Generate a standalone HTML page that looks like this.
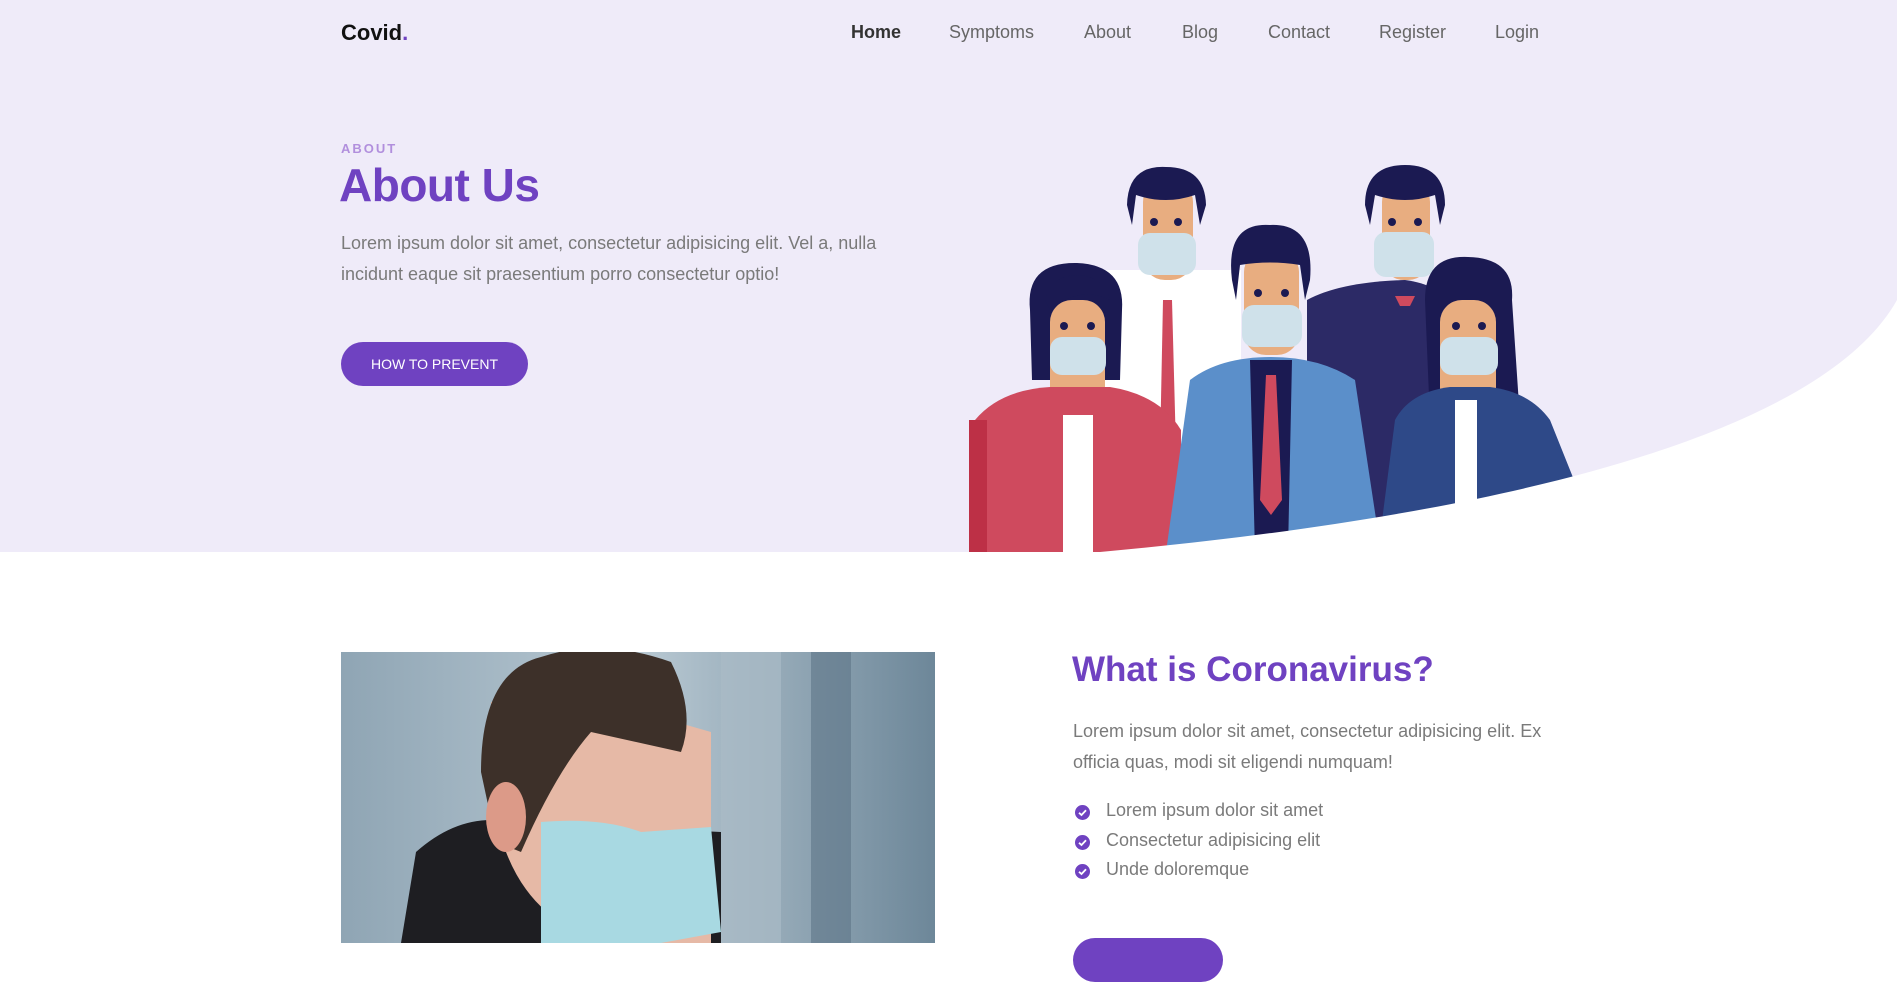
<!DOCTYPE html>
<html><head><meta charset="utf-8"><style>
*{margin:0;padding:0;box-sizing:border-box}
body{width:1897px;height:943px;overflow:hidden;background:#fff;font-family:"Liberation Sans",sans-serif;position:relative}
.hero{position:absolute;left:0;top:0;width:1897px;height:552px;background:#efebf9}
.abs{position:absolute;white-space:nowrap}
.logo{left:341px;top:20px;font-size:22px;font-weight:bold;color:#111}
.logo span{color:#6f42c1}
.nav{top:22px;font-size:18px;color:#666}
.p{color:#7a7a7a;font-size:18px;line-height:31px}
.btn{background:#6f42c1;color:#fff;border-radius:22px;text-align:center}
.li{font-size:18px;color:#7a7a7a}
.ck{position:absolute;width:15px;height:15px}
</style></head><body>
<div class="hero"></div>
<div class="abs logo">Covid<span>.</span></div>
<div class="abs nav" style="left:851px;color:#333;font-weight:bold">Home</div>
<div class="abs nav" style="left:949px">Symptoms</div>
<div class="abs nav" style="left:1084px">About</div>
<div class="abs nav" style="left:1182px">Blog</div>
<div class="abs nav" style="left:1268px">Contact</div>
<div class="abs nav" style="left:1379px">Register</div>
<div class="abs nav" style="left:1495px">Login</div>

<div class="abs" style="left:341px;top:141px;font-size:13px;font-weight:bold;letter-spacing:2px;color:#b18fdd">ABOUT</div>
<div class="abs" style="left:339px;top:158px;font-size:46px;font-weight:bold;color:#6f42c1;letter-spacing:-0.5px">About Us</div>
<div class="abs p" style="left:341px;top:228px">Lorem ipsum dolor sit amet, consectetur adipisicing elit. Vel a, nulla<br>incidunt eaque sit praesentium porro consectetur optio!</div>
<div class="abs btn" style="left:341px;top:342px;width:187px;height:44px;line-height:44px;font-size:14px">HOW TO PREVENT</div>

<svg class="abs" style="left:0;top:0" width="1897" height="552" viewBox="0 0 1897 552">
<g fill="#1b1a52">
<!-- back left man -->
<rect x="1103" y="270" width="138" height="282" fill="#fff"/>
<polygon points="1163,300 1172,300 1176,450 1168,470 1160,450" fill="#cf4a5e"/>
<rect x="1143" y="180" width="50" height="100" rx="22" fill="#e8ad80"/>
<path d="M1127,205 Q1128,165 1166,167 Q1205,167 1206,205 L1200,225 L1195,195 Q1166,205 1136,195 L1132,225 Z"/>
<circle cx="1154" cy="222" r="4"/><circle cx="1178" cy="222" r="4"/>
<rect x="1138" y="233" width="58" height="42" rx="12" fill="#cfe1ea"/>
<!-- back right man -->
<path d="M1307,300 Q1340,282 1405,280 Q1440,285 1440,300 L1440,552 L1307,552 Z" fill="#2c2a66"/>
<rect x="1382" y="180" width="48" height="100" rx="22" fill="#e8ad80"/>
<path d="M1365,205 Q1365,165 1405,165 Q1445,165 1445,205 L1440,225 L1435,195 Q1405,205 1375,195 L1370,225 Z"/>
<circle cx="1392" cy="222" r="4"/><circle cx="1418" cy="222" r="4"/>
<rect x="1374" y="232" width="60" height="45" rx="12" fill="#cfe1ea"/>
<polygon points="1395,296 1415,296 1410,306 1400,306" fill="#cf4a5e"/>
<!-- left woman -->
<path d="M1030,310 Q1025,262 1077,263 Q1125,265 1122,310 L1120,380 L1032,380 Z"/>
<rect x="1050" y="300" width="55" height="110" rx="22" fill="#e8ad80"/>
<path d="M1045,300 Q1050,275 1080,275 Q1105,278 1110,300 Q1080,285 1050,310 Z"/>
<circle cx="1064" cy="326" r="4"/><circle cx="1091" cy="326" r="4"/>
<rect x="1050" y="337" width="56" height="38" rx="12" fill="#cfe1ea"/>
<path d="M975,420 Q1000,390 1050,387 L1110,387 Q1160,395 1181,430 L1181,552 L969,552 Z" fill="#cf4a5e"/>
<rect x="1063" y="415" width="30" height="137" fill="#fff"/>
<rect x="969" y="420" width="18" height="132" fill="#bd3046"/>
<!-- right woman -->
<path d="M1425,300 Q1425,255 1468,257 Q1515,258 1512,300 L1520,420 L1430,420 Z"/>
<rect x="1440" y="300" width="56" height="110" rx="22" fill="#e8ad80"/>
<circle cx="1456" cy="326" r="4"/><circle cx="1482" cy="326" r="4"/>
<rect x="1440" y="337" width="58" height="38" rx="12" fill="#cfe1ea"/>
<path d="M1395,420 Q1410,392 1450,387 L1490,387 Q1530,392 1550,420 L1576,485 L1378,552 Z" fill="#2e4988"/>
<rect x="1455" y="400" width="22" height="110" fill="#fff"/>
<!-- center man -->
<path d="M1190,380 Q1220,357 1271,357 Q1320,357 1355,380 L1381,552 L1166,552 Z" fill="#5b8fca"/>
<polygon points="1250,360 1292,360 1288,552 1255,552"/>
<polygon points="1266,375 1276,375 1282,500 1271,515 1260,500" fill="#cf4a5e"/>
<rect x="1244" y="250" width="55" height="105" rx="22" fill="#e8ad80"/>
<path d="M1232,280 Q1225,222 1270,225 Q1315,223 1310,280 L1305,300 L1300,265 Q1270,260 1240,265 L1236,300 Z"/>
<circle cx="1258" cy="293" r="4"/><circle cx="1285" cy="293" r="4"/>
<rect x="1242" y="305" width="60" height="42" rx="12" fill="#cfe1ea"/>
</g>
<path d="M1897,300 C1830,420 1560,510 1100,552 L1897,552 Z" fill="#fff"/>
</svg>

<svg class="abs" style="left:341px;top:652px" width="594" height="291" viewBox="0 0 594 291">
<defs><linearGradient id="g" x1="0" x2="1"><stop offset="0" stop-color="#8fa5b4"/><stop offset=".5" stop-color="#b9c9d3"/><stop offset="1" stop-color="#6d8799"/></linearGradient></defs>
<rect width="594" height="291" fill="url(#g)"/>
<rect x="380" y="0" width="60" height="291" fill="#a9bac6" opacity=".7"/>
<rect x="470" y="0" width="40" height="291" fill="#5d7587" opacity=".6"/>
<path d="M60,291 L75,200 Q120,160 170,170 L380,180 L380,291 Z" fill="#1e1e22"/>
<path d="M150,50 Q150,140 165,200 Q200,290 300,291 L370,291 L370,80 L300,60 Z" fill="#e6b9a6"/>
<path d="M140,120 Q140,20 200,5 Q260,-15 330,10 Q355,60 340,100 L250,80 Q215,120 180,200 L155,190 Z" fill="#3d3029"/>
<ellipse cx="165" cy="165" rx="20" ry="35" fill="#dc9a88"/>
<path d="M200,170 Q260,165 300,180 L370,175 L380,280 L320,291 L200,291 Z" fill="#a8d9e2"/>
</svg>

<div class="abs" style="left:1072px;top:650px;font-size:35px;font-weight:bold;color:#6f42c1">What is Coronavirus?</div>
<div class="abs p" style="left:1073px;top:716px">Lorem ipsum dolor sit amet, consectetur adipisicing elit. Ex<br>officia quas, modi sit eligendi numquam!</div>
<svg class="ck" style="left:1075px;top:805px" viewBox="0 0 15 15"><circle cx="7.5" cy="7.5" r="7.5" fill="#6f42c1"/><path d="M4,7.8 L6.5,10 L11,5.2" stroke="#fff" stroke-width="1.8" fill="none"/></svg>
<svg class="ck" style="left:1075px;top:835px" viewBox="0 0 15 15"><circle cx="7.5" cy="7.5" r="7.5" fill="#6f42c1"/><path d="M4,7.8 L6.5,10 L11,5.2" stroke="#fff" stroke-width="1.8" fill="none"/></svg>
<svg class="ck" style="left:1075px;top:864px" viewBox="0 0 15 15"><circle cx="7.5" cy="7.5" r="7.5" fill="#6f42c1"/><path d="M4,7.8 L6.5,10 L11,5.2" stroke="#fff" stroke-width="1.8" fill="none"/></svg>
<div class="abs li" style="left:1106px;top:800px">Lorem ipsum dolor sit amet</div>
<div class="abs li" style="left:1106px;top:830px">Consectetur adipisicing elit</div>
<div class="abs li" style="left:1106px;top:859px">Unde doloremque</div>
<div class="abs btn" style="left:1073px;top:938px;width:150px;height:44px"></div>
</body></html>
